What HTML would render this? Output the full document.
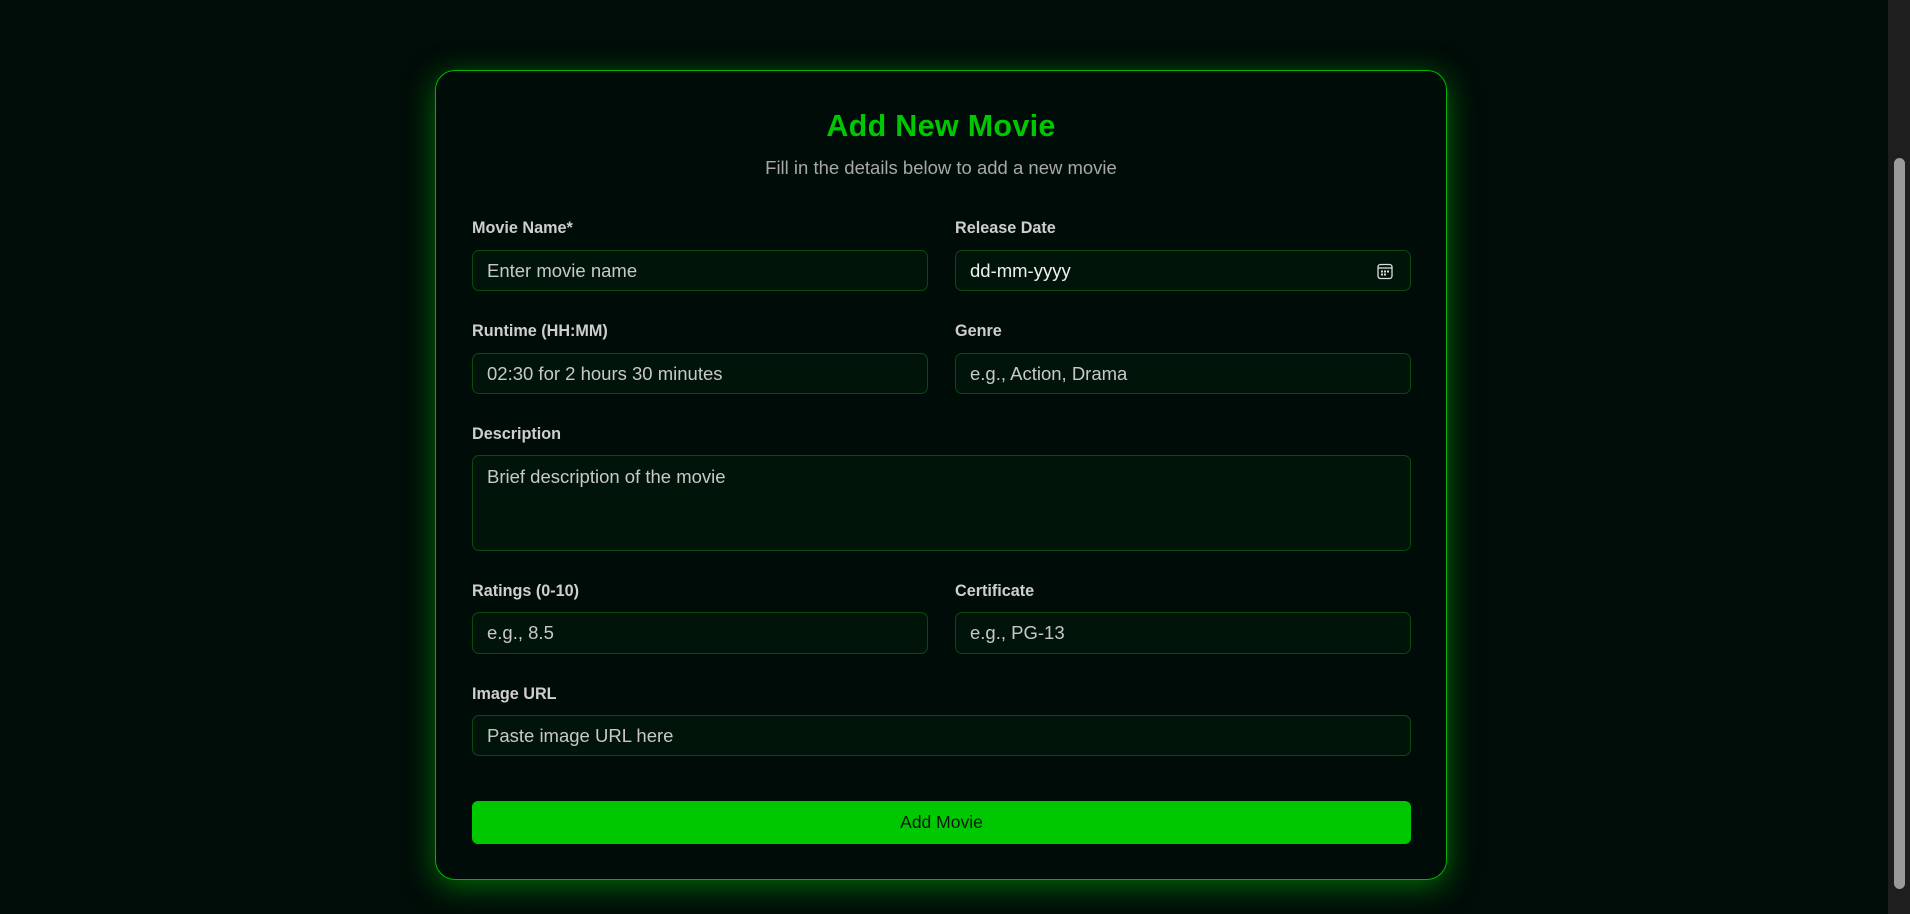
<!DOCTYPE html>
<html><head><meta charset="utf-8"><style>
*{box-sizing:border-box;margin:0;padding:0}
html,body{width:1910px;height:914px;overflow:hidden;background:#000d08;font-family:"Liberation Sans",sans-serif}
.card{position:absolute;left:435px;top:70px;width:1012px;height:810px;border:1px solid #00b400;border-radius:20px;background:#000c08;box-shadow:0 6px 30px rgba(0,200,0,.5)}
h1{position:absolute;left:0;right:0;top:38px;text-align:center;color:#00c800;font-size:30.5px;font-weight:bold;letter-spacing:.3px}
.sub{position:absolute;left:0;right:0;top:86px;text-align:center;color:#a8a8a8;font-size:18.5px}
.l{position:absolute;color:#cfcfcf;font-size:16.2px;font-weight:bold}
.i{position:absolute;background:#00140a;border:1px solid #0a4a10;border-radius:7px;color:#c8c8c8;font-size:18.5px;padding-left:14px;display:flex;align-items:center}
.btn{position:absolute;left:36px;top:730px;width:939px;height:43px;background:#00c800;border-radius:6px;color:#0a1a0a;font-size:17.5px;display:flex;align-items:center;justify-content:center}
.sb{position:absolute;right:0;top:0;width:22px;height:914px;background:#1e1e1e}
.th{position:absolute;right:5px;top:158px;width:11px;height:731px;background:#9a9a9a;border-radius:6px}
</style></head><body>
<div class="card">
<h1>Add New Movie</h1>
<div class="sub">Fill in the details below to add a new movie</div>
<div class="l" style="left:36px;top:148px">Movie Name*</div>
<div class="l" style="left:519px;top:148px">Release Date</div>
<div class="i" style="left:36px;top:179px;width:456px;height:41px">Enter movie name</div>
<div class="i" style="left:519px;top:179px;width:456px;height:41px;color:#f0f0f0">dd-mm-yyyy
<svg style="position:absolute;right:17px;top:12px" width="16" height="17" viewBox="0 0 16 17"><rect x="1" y="1.5" width="14" height="14" rx="2.5" fill="none" stroke="#ddd" stroke-width="1.3"/><line x1="1" y1="5" x2="15" y2="5" stroke="#ddd" stroke-width="1.3"/><g fill="#ddd"><rect x="4" y="7.5" width="2" height="2"/><rect x="7" y="7.5" width="2" height="2"/><rect x="10" y="7.5" width="2" height="2"/><rect x="4" y="10.5" width="2" height="2"/><rect x="7" y="10.5" width="2" height="2"/></g></svg></div>
<div class="l" style="left:36px;top:251px">Runtime (HH:MM)</div>
<div class="l" style="left:519px;top:251px">Genre</div>
<div class="i" style="left:36px;top:282px;width:456px;height:41px">02:30 for 2 hours 30 minutes</div>
<div class="i" style="left:519px;top:282px;width:456px;height:41px">e.g., Action, Drama</div>
<div class="l" style="left:36px;top:354px">Description</div>
<div class="i" style="left:36px;top:384px;width:939px;height:96px;align-items:flex-start;padding-top:10px">Brief description of the movie</div>
<div class="l" style="left:36px;top:511px">Ratings (0-10)</div>
<div class="l" style="left:519px;top:511px">Certificate</div>
<div class="i" style="left:36px;top:541px;width:456px;height:42px">e.g., 8.5</div>
<div class="i" style="left:519px;top:541px;width:456px;height:42px">e.g., PG-13</div>
<div class="l" style="left:36px;top:614px">Image URL</div>
<div class="i" style="left:36px;top:644px;width:939px;height:41px">Paste image URL here</div>
<div class="btn">Add Movie</div>
</div>
<div class="sb"><div class="th"></div></div>
</body></html>
